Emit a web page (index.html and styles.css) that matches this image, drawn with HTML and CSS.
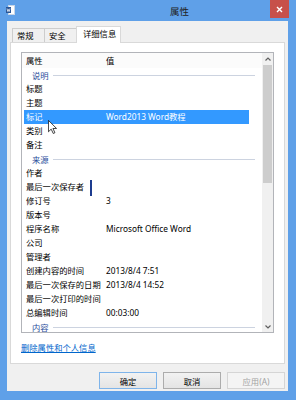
FILE: index.html
```html
<!DOCTYPE html>
<html lang="zh-CN">
<head>
    <meta charset="UTF-8">
    <title>属性</title>
    <link rel="stylesheet" href="styles.css">
</head>
<body>
    <div class="window">
        <div class="titlebar">
            <svg class="app-icon" viewBox="0 0 9 10" width="9" height="10">
                <rect x="2.5" y="0.5" width="6" height="9" fill="#fff" stroke="#c9d6e6"/>
                <rect x="0" y="2" width="5" height="6" fill="#2b5797"/>
                <path d="M1 3.5 L1.8 6.5 L2.5 4.5 L3.2 6.5 L4 3.5" fill="none" stroke="#fff" stroke-width="0.7"/>
            </svg>
            <span class="title">属性</span>
            <span class="close">
                <svg viewBox="0 0 7 7" width="7" height="7">
                    <path d="M1 1 L6 6 M6 1 L1 6" stroke="#fff" stroke-width="1.4"/>
                </svg>
            </span>
        </div>
        <div class="client">
            <div class="tabs">
                <span class="tab">常规</span>
                <span class="tab">安全</span>
                <span class="tab active">详细信息</span>
            </div>
            <div class="panel">
                <div class="listbox">
                    <div class="list">
                        <div class="row head"><span>属性</span><span>值</span></div>
                        <div class="group"><span>说明</span><i></i></div>
                        <div class="row"><span>标题</span><span></span></div>
                        <div class="row"><span>主题</span><span></span></div>
                        <div class="row selected"><span>标记</span><span>Word2013 Word教程</span></div>
                        <div class="row"><span>类别</span><span></span></div>
                        <div class="row"><span>备注</span><span></span></div>
                        <div class="group"><span>来源</span><i></i></div>
                        <div class="row"><span>作者</span><span></span></div>
                        <div class="row"><span>最后一次保存者</span><span></span></div>
                        <div class="row"><span>修订号</span><span>3</span></div>
                        <div class="row"><span>版本号</span><span></span></div>
                        <div class="row"><span>程序名称</span><span>Microsoft Office Word</span></div>
                        <div class="row"><span>公司</span><span></span></div>
                        <div class="row"><span>管理者</span><span></span></div>
                        <div class="row"><span>创建内容的时间</span><span>2013/8/4 7:51</span></div>
                        <div class="row"><span>最后一次保存的日期</span><span>2013/8/4 14:52</span></div>
                        <div class="row"><span>最后一次打印的时间</span><span></span></div>
                        <div class="row"><span>总编辑时间</span><span>00:03:00</span></div>
                        <div class="group"><span>内容</span><i></i></div>
                    </div>
                    <div class="scrollbar">
                        <span class="arrow">
                            <svg viewBox="0 0 6 4" width="6" height="4"><path d="M0.5 3.5 L3 1 L5.5 3.5" fill="none" stroke="#606060" stroke-width="1.2"/></svg>
                        </span>
                        <div class="track"><div class="thumb"></div></div>
                        <span class="arrow">
                            <svg viewBox="0 0 6 4" width="6" height="4"><path d="M0.5 0.5 L3 3 L5.5 0.5" fill="none" stroke="#606060" stroke-width="1.2"/></svg>
                        </span>
                    </div>
                    <svg class="pointer" viewBox="0 0 12 19" width="9" height="14">
                        <path d="M0.5 0.5 L0.5 16 L4.2 12.4 L7 18.3 L9.3 17.3 L6.6 11.5 L11.5 11.5 Z" fill="#fff" stroke="#000" stroke-width="1"/>
                    </svg>
                    <span class="caret"></span>
                </div>
                <a class="remove-link" href="#">删除属性和个人信息</a>
            </div>
            <div class="buttons">
                <button class="btn default">确定</button>
                <button class="btn">取消</button>
                <button class="btn" disabled>应用(A)</button>
            </div>
        </div>
    </div>
</body>
</html>
```

FILE: styles.css
```css
body {
    margin: 0;
    font-family: "Noto Sans", "Noto Sans CJK SC", sans-serif;
    font-size: 8.3px;
    color: #000;
}
.window {
    width: 296px;
    height: 400px;
    background-color: #5fa0e8;
    display: flex;
    flex-direction: column;
}
.titlebar {
    height: 21px;
    display: flex;
    align-items: flex-start;
    padding: 0 7px 0 6px;
}
.app-icon {
    margin-top: 5px;
}
.title {
    margin-left: 155px;
    margin-top: 4px;
    font-size: 9.5px;
    color: #222;
}
.close {
    margin-left: auto;
    width: 19px;
    height: 18px;
    background-color: #c7504a;
    display: flex;
    align-items: center;
    justify-content: center;
}
.client {
    margin: 0 8px 0 7px;
    height: 370px;
    background-color: #f0f0f0;
    display: flex;
    flex-direction: column;
}
.tabs {
    display: flex;
    align-items: flex-end;
    height: 16px;
    margin-top: 5px;
    padding-left: 5px;
}
.tab {
    box-sizing: border-box;
    width: 33px;
    height: 14px;
    line-height: 13px;
    padding-left: 4px;
    border: 1px solid #cdcdcd;
    border-bottom: none;
    margin-right: -1px;
    background-color: #f0f0f0;
}
.tab.active {
    width: 45px;
    height: 17px;
    line-height: 14px;
    padding-left: 6px;
    margin-bottom: -1px;
    background-color: #fff;
    border-color: #d9d9d9;
    position: relative;
}
.panel {
    box-sizing: border-box;
    margin: 0 3px;
    height: 322px;
    background-color: #fff;
    border: 1px solid #d9d9d9;
    display: flex;
    flex-direction: column;
}
.listbox {
    position: relative;
    box-sizing: border-box;
    margin: 9px 10px 0 10px;
    height: 281px;
    border: 1px solid #b2b4b9;
    display: flex;
    overflow: hidden;
}
.list {
    flex: 1;
}
.row {
    display: grid;
    grid-template-columns: 80px 1fr;
    height: 14px;
    line-height: 14px;
    margin: 0 13px 0 2px;
    padding-left: 2px;
    white-space: nowrap;
}
.row.head {
    height: 15px;
    line-height: 15px;
    background-color: #fbfbfb;
    margin: 0;
    padding-left: 4px;
}
.row.selected {
    background-color: #3399ff;
    color: #fff;
}
.group {
    display: flex;
    align-items: center;
    height: 14px;
    padding-left: 10px;
    margin-right: 7px;
    color: #2b4e9b;
}
.group i {
    flex: 1;
    height: 1px;
    margin-left: 4px;
    background-color: #ccd3e0;
}
.scrollbar {
    width: 11px;
    background-color: #f0f0f0;
    display: flex;
    flex-direction: column;
}
.arrow {
    height: 11px;
    display: flex;
    align-items: center;
    justify-content: center;
}
.track {
    flex: 1;
    padding: 1px 1px 0 1px;
}
.thumb {
    height: 118px;
    background-color: #cdcdcd;
}
.pointer {
    position: absolute;
    left: 26px;
    top: 67px;
}
.caret {
    position: absolute;
    left: 68px;
    top: 127px;
    width: 1.5px;
    height: 16px;
    background-color: #1d3c8f;
}
.remove-link {
    margin: 8px 0 0 10px;
    color: #0066cc;
    text-decoration: underline;
    align-self: flex-start;
}
.buttons {
    display: flex;
    justify-content: flex-end;
    gap: 6px;
    margin-top: 8px;
    padding-right: 3px;
}
.btn {
    box-sizing: border-box;
    width: 58px;
    height: 17px;
    padding: 0;
    font-family: inherit;
    font-size: 8.3px;
    color: #000;
    border: 1px solid #acacac;
    border-radius: 0;
    background: linear-gradient(#f2f2f2, #e4e4e4);
}
.btn.default {
    border-color: #7eb4ea;
}
.btn:disabled {
    color: #a3a3a3;
    border-color: #d5d5d5;
    background: #f4f4f4;
}
```
